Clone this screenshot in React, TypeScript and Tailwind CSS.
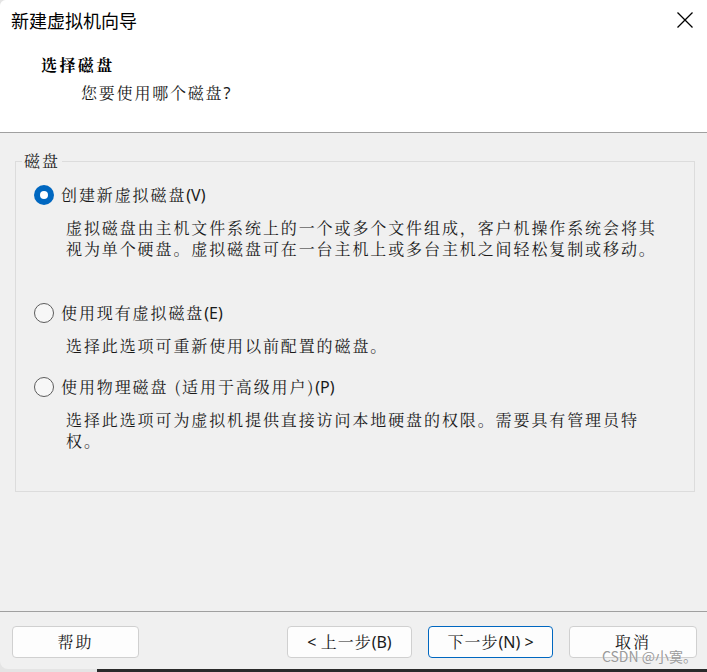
import React from "react";

const CJK = "font-['Noto_Serif_CJK_SC','Noto_Sans_CJK_SC','Noto_Sans',sans-serif]";
const SANS = "font-['Noto_Sans_CJK_SC','Noto_Sans',sans-serif]";
const LATIN = "font-['Noto_Sans','Liberation_Sans',sans-serif]";

function Radio({ checked }: { checked?: boolean }) {
  if (checked) {
    return (
      <span className="flex h-[20px] w-[20px] shrink-0 items-center justify-center rounded-full bg-[#0067c0]">
        <span className="h-[8px] w-[8px] rounded-full bg-white" />
      </span>
    );
  }
  return <span className="h-[20px] w-[20px] shrink-0 rounded-full border border-[#5c5c5c] bg-[#f7f7f7]" />;
}

function Option({ checked, label, hot, children }: { checked?: boolean; label: string; hot: string; children: React.ReactNode }) {
  return (
    <div>
      <div className="flex h-[24px] items-center pl-[18px]">
        <Radio checked={checked} />
        <span className={`ml-[7px] text-[16px] leading-[24px] tracking-[1.9px] text-[#1a1a1a] ${CJK}`}>
          {label}
          <span className={`tracking-normal ${LATIN}`}>{hot}</span>
        </span>
      </div>
      <div className={`mt-[10px] pl-[50px] pr-[30px] text-[16px] leading-[21px] tracking-[1.9px] text-[#1a1a1a] ${CJK}`}>
        {children}
      </div>
    </div>
  );
}

function Button({ children, primary, w }: { children: React.ReactNode; primary?: boolean; w: string }) {
  return (
    <div
      className={`flex h-[32px] items-center justify-center rounded-[4px] border bg-[#fdfdfd] text-[16px] text-[#1a1a1a] ${w} ${primary ? "border-[#0067c0]" : "border-[#d0d0d0]"}`}
    >
      {children}
    </div>
  );
}

export default function App() {
  return (
    <div className="relative flex h-[672px] w-[707px] flex-col overflow-hidden bg-[#e4e4e4]">
      <div className="flex h-[669px] flex-col overflow-hidden rounded-bl-[8px] rounded-tl-[6px] bg-[#f0f0f0]">
        {/* header */}
        <div className="h-[133px] shrink-0 border-b border-[#a0a0a0] bg-white">
          <div className="flex h-[40px] items-center justify-between pl-[11px] pr-[13px]">
            <span className={`text-[18px] leading-[24px] text-black ${SANS}`}>新建虚拟机向导</span>
            <svg width="18" height="18" viewBox="0 0 18 18" className="text-black">
              <path d="M1.5 1.5 L16.5 16.5 M16.5 1.5 L1.5 16.5" stroke="currentColor" strokeWidth="1.3" fill="none" />
            </svg>
          </div>
          <div className={`mt-[13px] pl-[41px] text-[16px] font-bold leading-[24px] tracking-[2.4px] text-black ${CJK}`}>
            选择磁盘
          </div>
          <div className={`mt-[4px] pl-[81px] text-[16px] leading-[24px] tracking-[1.8px] text-[#1a1a1a] ${CJK}`}>
            您要使用哪个磁盘<span className={LATIN}>?</span>
          </div>
        </div>

        {/* body */}
        <div className="flex-1 px-[15px] pt-[28px]">
          <div className="relative h-[331px] w-[680px] border border-[#dcdcdc] pt-[21px]">
            <span className={`absolute left-[6px] top-[-12px] bg-[#f0f0f0] px-[2px] text-[16px] leading-[22px] tracking-[1.9px] text-[#1a1a1a] ${CJK}`}>
              磁盘
            </span>
            <Option checked label="创建新虚拟磁盘" hot="(V)">
              虚拟磁盘由主机文件系统上的一个或多个文件组成，客户机操作系统会将其
              <br />
              视为单个硬盘。虚拟磁盘可在一台主机上或多台主机之间轻松复制或移动。
            </Option>
            <div className="h-[42px]" />
            <Option label="使用现有虚拟磁盘" hot="(E)">
              选择此选项可重新使用以前配置的磁盘。
            </Option>
            <div className="h-[19px]" />
            <Option label="使用物理磁盘 (适用于高级用户)" hot="(P)">
              选择此选项可为虚拟机提供直接访问本地硬盘的权限。需要具有管理员特
              <br />
              权。
            </Option>
          </div>
        </div>

        {/* footer */}
        <div className="h-[58px] shrink-0 border-t border-[#a0a0a0] pl-[12px] pr-[10px] pt-[14px]">
          <div className="flex items-center">
            <Button w="w-[127px]">
              <span className={`tracking-[2px] ${CJK}`}>帮助</span>
            </Button>
            <div className="ml-auto flex gap-[16px]">
              <Button w="w-[125px]">
                <span className={LATIN}>&lt;&nbsp;</span>
                <span className={`tracking-[1px] ${CJK}`}>上一步</span>
                <span className={LATIN}>(B)</span>
              </Button>
              <Button w="w-[125px]" primary>
                <span className={`tracking-[1px] ${CJK}`}>下一步</span>
                <span className={LATIN}>(N)&nbsp;&gt;</span>
              </Button>
              <Button w="w-[128px]">
                <span className={`tracking-[2px] ${CJK}`}>取消</span>
              </Button>
            </div>
          </div>
        </div>
      </div>
      <div className="flex h-[3px]">
        <div className="w-[97px] bg-[#e4e4e4]" />
        <div className="flex-1 bg-[#2a2a2a]" />
      </div>
      <span
        className={`absolute right-[10px] top-[646px] text-[14px] leading-[20px] text-[#9a9a9a] [text-shadow:0_0_1px_#fff] ${SANS}`}
      >
        CSDN @小寞。
      </span>
    </div>
  );
}
